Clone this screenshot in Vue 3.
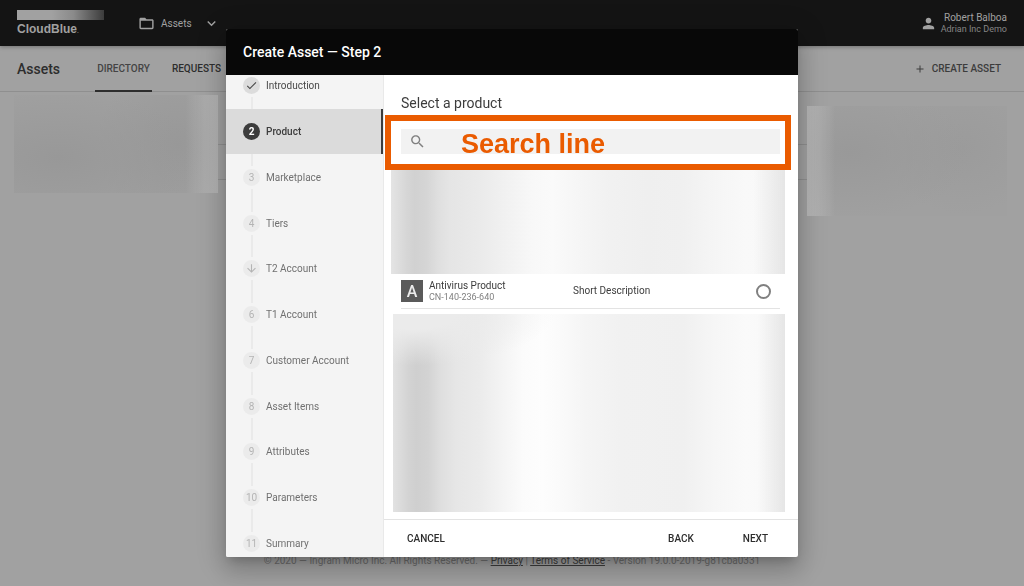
<script setup>
import { ref } from 'vue'

const steps = ref([
  { label: 'Introduction', icon: 'check' },
  { label: 'Product' },
  { label: 'Marketplace' },
  { label: 'Tiers' },
  { label: 'T2 Account', icon: 'arrow' },
  { label: 'T1 Account' },
  { label: 'Customer Account' },
  { label: 'Asset Items' },
  { label: 'Attributes' },
  { label: 'Parameters' },
  { label: 'Summary' }
])

const current = ref(1)
const search = ref('')
const selected = ref(null)

const next = () => {
  if (current.value < steps.value.length - 1) {
    current.value++
  }
}

const back = () => {
  if (current.value > 0) {
    current.value--
  }
}
</script>

<template>
  <div class="app">
    <header class="topbar">
      <div class="logo">
        <span class="logo-bar"></span>
        <span class="logo-name">CloudBlue<i>.</i></span>
      </div>
      <button class="module">
        <svg class="folder" viewBox="0 0 24 24"><path d="M20 6h-8l-2-2H4c-1.100 0-2 .9-2 2v12c0 1.100.9 2 2 2h16c1.100 0 2-.9 2-2V8c0-1.100-.9-2-2-2zm0 12H4V8h16v10z" /></svg>
        <span>Assets</span>
        <svg class="chevron" viewBox="0 0 24 24"><path d="M7.410 8.590 12 13.170l4.590-4.580L18 10l-6 6-6-6z" /></svg>
      </button>
      <div class="user">
        <svg viewBox="0 0 24 24"><path d="M12 12c2.210 0 4-1.790 4-4s-1.790-4-4-4-4 1.790-4 4 1.790 4 4 4zm0 2c-2.670 0-8 1.340-8 4v2h16v-2c0-2.660-5.330-4-8-4z" /></svg>
        <div>
          <p class="user-name">Robert Balboa</p>
          <p class="user-account">Adrian Inc Demo</p>
        </div>
      </div>
    </header>

    <nav class="subbar">
      <h1>Assets</h1>
      <a href="#" class="tab active">DIRECTORY</a>
      <a href="#" class="tab">REQUESTS</a>
      <button class="create">
        <svg viewBox="0 0 24 24"><path d="M19 13h-6v6h-2v-6H5v-2h6V5h2v6h6v2z" /></svg>
        <span>CREATE ASSET</span>
      </button>
    </nav>

    <section class="directory">
      <div class="haze haze-left"></div>
      <div class="lines">
        <div class="line head"></div>
        <div class="line"></div>
      </div>
      <div class="haze haze-right"></div>
    </section>

    <footer class="legal">
      © 2020 — Ingram Micro Inc. All Rights Reserved. — <a href="#">Privacy</a> | <a href="#">Terms of Service</a> - Version 19.0.0-2019-g81cba0331
    </footer>

    <div class="overlay">
      <section class="dialog" role="dialog" aria-labelledby="dialog-title">
        <h2 id="dialog-title" class="dialog-title">Create Asset — Step {{ current + 1 }}</h2>
        <div class="dialog-body">
          <aside class="sidebar">
            <ol class="steps">
              <li
                v-for="(step, index) in steps"
                :key="step.label"
                class="step"
                :class="{ active: index === current, done: index < current }">
                <span class="marker">
                  <span class="circle">
                    <svg v-if="step.icon === 'check'" viewBox="0 0 24 24"><path d="M9 16.170 4.830 12l-1.420 1.410L9 19 21 7l-1.410-1.410z" /></svg>
                    <svg v-else-if="step.icon === 'arrow'" viewBox="0 0 24 24"><path d="m20 12-1.410-1.410L13 16.170V4h-2v12.170l-5.580-5.590L4 12l8 8 8-8z" /></svg>
                    <template v-else>{{ index + 1 }}</template>
                  </span>
                </span>
                <span>{{ step.label }}</span>
              </li>
            </ol>
          </aside>

          <div class="panel">
            <h3>Select a product</h3>
            <div class="highlight">
              <div class="search">
                <svg viewBox="0 0 24 24"><path d="M15.500 14h-.79l-.28-.27C15.410 12.590 16 11.110 16 9.500 16 5.910 13.090 3 9.500 3S3 5.910 3 9.500 5.910 16 9.500 16c1.610 0 3.090-.59 4.230-1.570l.27.28v.79l5 4.990L20.490 19l-4.990-5zm-6 0C7.010 14 5 11.990 5 9.500S7.010 5 9.500 5 14 7.010 14 9.500 11.990 14 9.500 14z" /></svg>
                <input v-model="search" type="text" aria-label="Search line">
              </div>
              <span class="caption">Search line</span>
            </div>

            <div class="blurred blurred-top"></div>
            <label class="product">
              <span class="badge">A</span>
              <span class="product-info">
                <span class="product-name">Antivirus Product</span>
                <span class="product-id">CN-140-236-640</span>
              </span>
              <span class="product-text">Short Description</span>
              <input v-model="selected" type="radio" name="product" value="CN-140-236-640">
            </label>
            <div class="blurred blurred-bottom"></div>

            <div class="actions">
              <button>CANCEL</button>
              <span class="spacer"></span>
              <button @click="back">BACK</button>
              <button @click="next">NEXT</button>
            </div>
          </div>
        </div>
      </section>
    </div>
  </div>
</template>

<style>
body {
  margin: 0;
  background-color: #a1a1a1;
}
</style>

<style scoped>
* {
  margin: 0;
  padding: 0;
  box-sizing: border-box;
}

.app {
  display: flex;
  flex-direction: column;
  min-height: 100vh;
  font-family: Roboto, sans-serif;
  font-size: 10px;
  color: #2d2d2d;
}

button {
  appearance: none;
  border: none;
  background: none;
  font: inherit;
  color: inherit;
  cursor: pointer;
}

svg {
  flex: none;
  fill: currentColor;
}

.topbar {
  display: flex;
  align-items: center;
  height: 46px;
  padding: 0 17px;
  background-color: #141414;
  color: #a1a1a1;
  box-shadow: 0 1px 4px rgba(0, 0, 0, 0.3);
}

.logo {
  display: flex;
  flex-direction: column;
  gap: 2px;
  width: 87px;
  padding-top: 1px;
}

.logo-bar {
  height: 10px;
  background: linear-gradient(90deg, #a1a1a1 40%, #8a8a8a 65%, #3c3c3c);
}

.logo-name {
  font-family: 'Liberation Sans', sans-serif;
  font-size: 12px;
  font-weight: 700;
  line-height: 14px;
}

.logo-name i {
  font-size: 8px;
  opacity: 0.5;
}

.module {
  display: flex;
  align-items: center;
  margin-left: 34px;
}

.folder {
  width: 17px;
  height: 17px;
  margin-right: 6px;
}

.chevron {
  width: 17px;
  height: 17px;
  margin-left: 11px;
}

.user {
  display: flex;
  align-items: center;
  gap: 4px;
  margin-left: auto;
  text-align: right;
}

.user svg {
  width: 17px;
  height: 17px;
}

.user-name {
  font-size: 10px;
  line-height: 12px;
}

.user-account {
  font-size: 9px;
  line-height: 11px;
  color: #858585;
}

.subbar {
  display: flex;
  align-items: stretch;
  height: 46px;
  padding: 0 23px 0 17px;
  border-bottom: 1px solid #8f8f8f;
}

h1 {
  width: 78px;
  font-size: 14px;
  font-weight: 500;
  line-height: 46px;
}

.tab {
  min-width: 57px;
  margin: 0 16px -1px 0;
  font-weight: 500;
  line-height: 46px;
  text-align: center;
  color: #2d2d2d;
  text-decoration: none;
}

.tab.active {
  color: #444;
  border-bottom: 2px solid #2d2d2d;
}

.create {
  display: flex;
  align-items: center;
  gap: 6px;
  margin-left: auto;
  font-weight: 500;
  color: #3c3c3c;
}

.create svg {
  width: 12px;
  height: 12px;
}

.directory {
  display: flex;
  align-items: flex-start;
  flex: 1;
  padding: 0 17px 0 14px;
}

.haze {
  flex: none;
}

.haze-left {
  width: 204px;
  height: 98px;
  margin-top: 3px;
  background:
    linear-gradient(90deg, transparent 84%, rgba(200, 200, 200, 0.5)),
    radial-gradient(ellipse 70% 70% at 22% 64%, #989898, transparent),
    radial-gradient(ellipse 40% 80% at 80% 50%, #989898, transparent),
    #a0a0a0;
}

.haze-right {
  width: 200px;
  height: 110px;
  margin-top: 14px;
  background:
    linear-gradient(90deg, rgba(200, 200, 200, 0.6), transparent 14%),
    radial-gradient(ellipse 60% 60% at 22% 42%, #999, transparent),
    radial-gradient(ellipse 40% 60% at 78% 38%, #9b9b9b, transparent),
    #a0a0a0;
}

.lines {
  flex: 1;
}

.line {
  height: 35px;
  border-bottom: 1px solid #8f8f8f;
}

.line.head {
  height: 53px;
}

.legal {
  padding-bottom: 18px;
  line-height: 14px;
  text-align: center;
  color: #6c6c6c;
}

.legal a {
  color: #3c3c3c;
}

.overlay {
  position: fixed;
  inset: 0;
  display: flex;
  justify-content: center;
  padding: 29px 0;
}

.dialog {
  display: flex;
  flex-direction: column;
  width: 100%;
  max-width: 572px;
  overflow: hidden;
  border-radius: 2px;
  background-color: #fff;
  box-shadow:
    0 6px 10px -4px rgba(0, 0, 0, 0.2),
    0 14px 24px 2px rgba(0, 0, 0, 0.14),
    0 5px 28px 5px rgba(0, 0, 0, 0.12);
}

.dialog-title {
  flex: none;
  padding: 0 17px;
  font-size: 14px;
  font-weight: 500;
  line-height: 46px;
  color: #fff;
  background-color: #080808;
}

.dialog-body {
  display: flex;
  flex: 1;
  min-height: 0;
}

.sidebar {
  display: flex;
  flex-direction: column;
  flex: none;
  width: 158px;
  overflow: hidden;
  border-right: 1px solid #e9e9e9;
  background-color: #f4f4f4;
}

.steps {
  display: flex;
  flex-direction: column;
  flex: 1;
  margin: -12px 0 -9px;
  list-style: none;
}

.step {
  display: flex;
  align-items: center;
  gap: 6px;
  flex: 1;
  padding-left: 17px;
  color: #707070;
}

.step.done {
  color: #484848;
}

.step.active {
  border-right: 2px solid #3c3c3c;
  background-color: #dbdbdb;
  font-weight: 500;
  color: #3c3c3c;
}

.marker {
  display: flex;
  flex-direction: column;
  align-items: center;
  gap: 3px;
  align-self: stretch;
}

.marker::before,
.marker::after {
  content: '';
  flex: 1;
  width: 2px;
  background-color: #eaeaea;
}

.active .marker::before,
.active .marker::after,
.step:last-child .marker::after,
.step:first-child .marker::before {
  background-color: transparent;
}

.circle {
  display: flex;
  align-items: center;
  justify-content: center;
  width: 17px;
  height: 17px;
  border-radius: 50%;
  background-color: #ebebeb;
  color: #b4b4b4;
}

.circle svg {
  width: 13px;
  height: 13px;
}

.done .circle {
  background-color: #dcdcdc;
  color: #484848;
}

.active .circle {
  background-color: #3c3c3c;
  font-weight: 700;
  color: #fff;
}

.panel {
  display: flex;
  flex-direction: column;
  flex: 1;
  min-width: 0;
}

h3 {
  margin-left: 17px;
  padding: 18px 0 2px;
  font-size: 14px;
  font-weight: 400;
  line-height: 20px;
  color: #3c3c3c;
}

.highlight {
  position: relative;
  margin: 0 7px 0 1px;
  padding: 8px 5px 10px 10px;
  border: 6px solid #ea5b00;
}

.search {
  display: flex;
  align-items: center;
  height: 25px;
  padding-left: 8px;
  background-color: #f2f2f2;
  color: #808080;
}

.search svg {
  width: 17px;
  height: 17px;
}

.search input {
  flex: 1;
  height: 100%;
  padding: 0 8px;
  border: none;
  outline: none;
  background: none;
  font: inherit;
}

/* sits over the search field */
.caption {
  position: absolute;
  top: 7px;
  left: 70px;
  font-family: 'Liberation Sans', sans-serif;
  font-size: 27px;
  font-weight: 700;
  line-height: 32px;
  color: #ea5b00;
  pointer-events: none;
}

.blurred {
  margin-right: 13px;
}

.blurred-top {
  flex: none;
  height: 104px;
  margin-left: 7px;
  background:
    linear-gradient(90deg, transparent 92%, rgba(0, 0, 0, 0.07)),
    linear-gradient(90deg, #e4e4e4, #d6d6d6 4%, #d1d1d1 6%, #d5d5d5 9%, #dfdfdf 12%, #e5e5e5 15%, #eaeaea 22%, #f1f1f1 29%, #f8f8f8 36%, #fafafa 41%, #f6f6f6 47%, #f1f1f1 56%, #efefef 65%, #f0f0f0 74%, #f5f5f5 82%, #f9f9f9 90%, #f7f7f7);
}

.blurred-bottom {
  flex: 1;
  margin: 5px 13px 7px 9px;
  background:
    radial-gradient(ellipse 36% 26% at 5% 0, #ebebeb 30%, transparent),
    linear-gradient(90deg, transparent 93%, rgba(0, 0, 0, 0.07)),
    linear-gradient(90deg, #e2e2e2, #d3d3d3 4%, #cfcfcf 6%, #d3d3d3 9%, #dedede 12%, #e6e6e6 16%, #ebebeb 22%, #f4f4f4 28%, #fbfbfb 33%, #fdfdfd 38%, #fafafa 43%, #f5f5f5 49%, #f1f1f1 58%, #f0f0f0 74%, #f6f6f6 82%, #fafafa 90%, #f7f7f7);
}

.product {
  display: flex;
  align-items: center;
  flex: none;
  height: 35px;
  margin: 0 18px 0 17px;
  border-bottom: 1px solid #e3e3e3;
  color: #3c3c3c;
  cursor: pointer;
}

.badge {
  width: 22px;
  height: 22px;
  margin-right: 6px;
  background-color: #5a5a5a;
  font-size: 16px;
  font-weight: 500;
  line-height: 23px;
  text-align: center;
  color: #ececec;
}

.product-info {
  display: flex;
  flex-direction: column;
  width: 144px;
}

.product-name {
  line-height: 12px;
}

.product-id {
  font-size: 9px;
  line-height: 11px;
  color: #808080;
}

.product-text {
  flex: 1;
  padding-bottom: 2px;
}

.product input {
  appearance: none;
  width: 15px;
  height: 15px;
  margin-right: 9px;
  border: 2px solid #808080;
  border-radius: 50%;
}

.product input:checked {
  background: radial-gradient(#3c3c3c 40%, transparent 50%);
}

.actions {
  display: flex;
  align-items: center;
  flex: none;
  gap: 33px;
  height: 38px;
  padding: 0 22px 0 15px;
  border-top: 1px solid #e3e3e3;
  font-weight: 500;
}

.actions button {
  padding: 8px;
}

.spacer {
  flex: 1;
}
</style>
